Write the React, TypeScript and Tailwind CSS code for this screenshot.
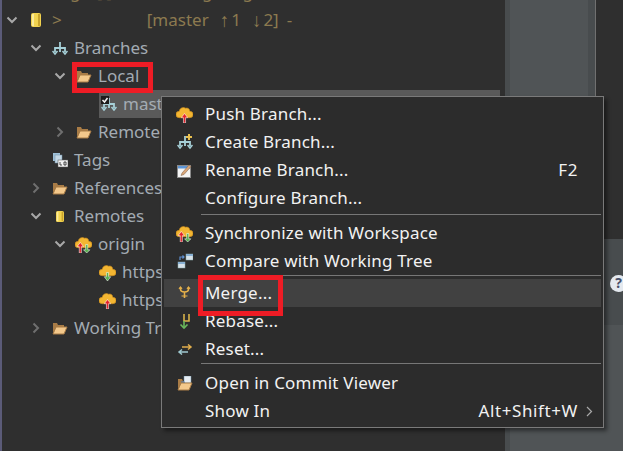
import type { ReactNode } from "react";

const Chevron = ({ open }: { open?: boolean }) => (
  <svg width="12" height="12" viewBox="0 0 12 12" fill="none" stroke="#a8a8a8" strokeWidth="2">
    {open ? <path d="M1.5 3.5L6 8l4.5-4.5" /> : <path d="M3.5 1.5L8 6l-4.500 4.500" stroke="#6f6f6f" />}
  </svg>
);

const Folder = () => (
  <svg width="16" height="13" viewBox="0 0 16 13">
    <path d="M1 1h4l1 2h6v2H4L1 11z" fill="#a97c46" />
    <path d="M1 12l3-7h11l-3 7z" fill="#f3c88b" stroke="#a97c46" />
  </svg>
);

const Repo = ({ large }: { large?: boolean }) => (
  <svg width={large ? 10 : 8} height={large ? 14 : 11} viewBox="0 0 10 14" preserveAspectRatio="none">
    <rect x="0" y="0" width="10" height="14" rx="2" fill="#f2d34f" />
    <rect x="1" y="1" width="2" height="12" fill="#fbeb9a" />
    <rect x="7" y="1" width="2" height="12" fill="#c9a42c" />
  </svg>
);

const BranchIcon = ({ plus }: { plus?: boolean }) => (
  <svg width="16" height="16" viewBox="0 0 16 16" fill="none" stroke="#a6d0d8" strokeWidth="1.8">
    <path d="M8 2v10M3 12V8h10v4" />
    <path d="M0.5 11l2.500 3 2.500-3M10.500 11l2.500 3 2.500-3" strokeWidth="1.5" />
    {plus && <path d="M12 0v6M9 3h6" stroke="#e8c04f" strokeWidth="2" />}
  </svg>
);

const Cloud = ({ arrow }: { arrow: "up" | "down" | "both" }) => (
  <svg width="17" height="17" viewBox="0 0 16 16">
    <path d="M3 11a3 3 0 0 1 0-6 4 4 0 0 1 6-3 3.500 3.500 0 0 1 4 3 3 3 0 0 1 0 6z" fill="#f3b632" stroke="#c98a1c" strokeWidth="0.6" />
    {(arrow === "up" || arrow === "both") && (
      <path d={arrow === "both" ? "M4 16V10H2l3-4 3 4H6v6z" : "M7 16v-5H5l3-4 3 4H9v5z"} fill="#e3222a" stroke="#fff" strokeWidth="0.5" />
    )}
    {(arrow === "down" || arrow === "both") && (
      <path d={arrow === "both" ? "M10 8v5H8l3 3 3-3h-2V8z" : "M7 8v4H5l3 4 3-4H9V8z"} fill="#58b04f" stroke="#fff" strokeWidth="0.5" />
    )}
  </svg>
);

const Tags = () => (
  <svg width="16" height="16" viewBox="0 0 16 16">
    <rect x="1" y="1" width="7" height="8" fill="#9ec0d8" />
    <rect x="3" y="3" width="7" height="8" fill="#c4d8e6" stroke="#6e8da3" strokeWidth="0.5" />
    <rect x="6" y="8" width="10" height="7" fill="#f2f2f2" stroke="#555" strokeWidth="0.5" />
    <path d="M8 10v3h2M12 10h2v3h-2z" fill="none" stroke="#222" strokeWidth="0.8" />
  </svg>
);

const Rename = () => (
  <svg width="15" height="15" viewBox="0 0 15 15">
    <rect x="0.5" y="2.500" width="13" height="12" fill="#f4f4f4" stroke="#8a8a8a" />
    <rect x="1" y="3" width="12" height="2.500" fill="#5d95d6" />
    <path d="M5 10l7-8 2 1.500-7 8-3 1z" fill="#d9a679" stroke="#7a5a40" strokeWidth="0.5" />
  </svg>
);

const Compare = () => (
  <svg width="16" height="16" viewBox="0 0 16 16">
    <rect x="9" y="1" width="7" height="6" fill="#d7e2ea" stroke="#8aa" strokeWidth="0.5" />
    <rect x="9" y="1" width="7" height="2" fill="#89b1d4" />
    <rect x="1" y="9" width="7" height="6" fill="#d7e2ea" stroke="#8aa" strokeWidth="0.5" />
    <rect x="1" y="9" width="7" height="2" fill="#89b1d4" />
    <path d="M3 7V4h4M5.500 2.500L7 4 5.500 5.500" fill="none" stroke="#5f8fd0" strokeWidth="1.2" />
  </svg>
);

const Merge = () => (
  <svg width="13" height="14" viewBox="0 0 12 14" fill="none" stroke="#e5b04a" strokeWidth="1.6">
    <path d="M2 1v2c0 2 2 3 4 3s4-1 4-3V1M6 6v6" />
    <path d="M0.500 3L2 1l1.500 2M8.500 3L10 1l1.500 2M3 10h6" strokeWidth="1.2" />
  </svg>
);

const Rebase = () => (
  <svg width="14" height="17" viewBox="0 0 14 17" fill="none" strokeWidth="1.6">
    <path d="M11 1v7H6V1" stroke="#d8b24a" />
    <path d="M6 8v6" stroke="#6ab85c" />
    <path d="M2.500 11.500L6 15l3.500-3.500" stroke="#6ab85c" />
  </svg>
);

const Reset = () => (
  <svg width="16" height="11" viewBox="0 0 16 11" fill="none" strokeWidth="1.5">
    <path d="M5 3h8M11 0.500L14 3l-3 2.500" stroke="#e0ad4c" />
    <path d="M3 8h8M5 5.500L2 8l3 2.500" stroke="#9ec8cf" />
  </svg>
);

const CommitViewer = () => (
  <svg width="16" height="15" viewBox="0 0 16 15">
    <path d="M1 3h4l1 2h7v2H4l-3 6z" fill="#a97c46" />
    <rect x="7" y="0" width="7" height="7" fill="#e8eef4" stroke="#6e8da3" strokeWidth="0.5" />
    <path d="M4 6h3v1h1" fill="none" stroke="#3f78c0" strokeWidth="1.2" />
    <path d="M1 14l3-7h11l-3 7z" fill="#f3c88b" stroke="#a97c46" />
  </svg>
);

const Checkbox = () => (
  <svg width="8" height="8" viewBox="0 0 8 8" className="absolute left-[2px] top-[6px]">
    <rect width="8" height="8" fill="#1c1c1c" />
    <path d="M1.500 4l2 2 3-4" fill="none" stroke="#f4f4f4" strokeWidth="1.500" />
  </svg>
);

const TreeRow = ({
  indent,
  chevron,
  icon,
  children,
}: {
  indent: number;
  chevron?: "open" | "closed";
  icon?: ReactNode;
  children: ReactNode;
}) => (
  <div className="flex h-7 items-center whitespace-nowrap" style={{ paddingLeft: indent }}>
    <span className="flex w-[17px] shrink-0 items-center">
      {chevron && <Chevron open={chevron === "open"} />}
    </span>
    <span className="flex w-[27px] shrink-0 items-center justify-center pr-[2px]">{icon}</span>
    <span>{children}</span>
  </div>
);

const MenuRow = ({
  icon,
  label,
  shortcut,
  arrow,
  hover,
}: {
  icon?: ReactNode;
  label: string;
  shortcut?: string;
  arrow?: boolean;
  hover?: boolean;
}) => (
  <div className={`flex h-7 items-center ${hover ? "bg-[#414141]" : ""}`}>
    <span className="flex w-[41px] shrink-0 items-center justify-center">{icon}</span>
    <span className="flex-1">{label}</span>
    {shortcut && <span className="tracking-[0.6px]">{shortcut}</span>}
    <span className="flex w-[23px] shrink-0 items-center justify-center">
      {arrow && (
        <svg width="7" height="11" viewBox="0 0 7 11" fill="none" stroke="#a8a8a8" strokeWidth="1.2">
          <path d="M1 1l4.500 4.500L1 10" />
        </svg>
      )}
    </span>
  </div>
);

const peeks = [265, 275, 293, 332, 336, 376, 395];

export default function App() {
  return (
    <div className="relative flex h-[451px] w-[623px] overflow-hidden bg-[#2f2f2f] font-['Noto_Sans','Open_Sans',sans-serif] text-[17px]">
      <div className="w-[2px] shrink-0 bg-[#5b5b78]" />

      <div className="-ml-[2px] -mt-[22px] w-[505px] shrink-0 text-[#a3abb3]">
        <div className="flex h-7 items-center whitespace-pre pl-[70px] text-[#8c7a4f]">
          <span>g</span>
          <span className="ml-[16px]">[ ]</span>
          <span className="ml-[90px]">g</span>
          <span className="ml-[30px]">g</span>
        </div>
        <div className="flex h-7 items-center whitespace-nowrap pl-[6px] text-[#8c7a4f]">
          <span className="flex w-[17px] shrink-0 items-center">
            <Chevron open />
          </span>
          <span className="flex w-[27px] shrink-0 items-center justify-center pr-[2px]">
            <Repo large />
          </span>
          <span className="ml-[2px]">&gt;</span>
          <span className="ml-[85px]">[master</span>
          <span className="ml-[11px] text-[19px] leading-none">↑</span>
          <span className="ml-[2px]">1</span>
          <span className="ml-[11px] text-[19px] leading-none">↓</span>
          <span className="ml-[2px]">2]</span>
          <span className="ml-[8px]">-</span>
        </div>
        <TreeRow indent={30} chevron="open" icon={<BranchIcon />}>Branches</TreeRow>
        <TreeRow indent={54} chevron="open" icon={<Folder />}>Local</TreeRow>
        <div className="relative ml-[99px] mr-[5px] flex h-7 items-center bg-[#5a5a5a] pl-[2px]">
          <BranchIcon />
          <Checkbox />
          <span className="ml-[6px]">master</span>
          {peeks.map((x) => (
            <span key={x} className="absolute top-[6px] h-px w-[3px] bg-[#a0a0a0]" style={{ left: x }} />
          ))}
        </div>
        <TreeRow indent={54} chevron="closed" icon={<Folder />}>Remote Tracking</TreeRow>
        <TreeRow indent={30} icon={<Tags />}>Tags</TreeRow>
        <TreeRow indent={30} chevron="closed" icon={<Folder />}>References</TreeRow>
        <TreeRow indent={30} chevron="open" icon={<Repo />}>Remotes</TreeRow>
        <TreeRow indent={54} chevron="open" icon={<Cloud arrow="both" />}>origin</TreeRow>
        <TreeRow indent={78} icon={<Cloud arrow="down" />}>https://github.com</TreeRow>
        <TreeRow indent={78} icon={<Cloud arrow="up" />}>https://github.com</TreeRow>
        <TreeRow indent={30} chevron="closed" icon={<Folder />}>Working Tree</TreeRow>
      </div>

      <div className="flex min-w-0 flex-1 flex-col">
        <div className="flex h-[239px] shrink-0">
          <div className="w-[5px] shrink-0 bg-[#484c4e]" />
          <div className="w-[78px] shrink-0 bg-[#505456]" />
          <div className="w-[7px] shrink-0 bg-[#484c4e]" />
          <div className="w-px shrink-0 bg-[#707070]" />
          <div className="flex-1 bg-[#2f2f2f]" />
        </div>
        <div className="flex h-[86px] shrink-0 items-center justify-end bg-[#484c4e]">
          <div className="mr-[-4px] mt-[2px] flex h-[17px] w-[17px] items-center justify-center rounded-full bg-[#e4e9ef] text-[14px] font-bold leading-none text-[#47506a]">
            ?
          </div>
        </div>
        <div className="flex flex-1">
          <div className="w-[5px] shrink-0 bg-[#484c4e]" />
          <div className="flex-1 bg-[#505456]" />
        </div>
      </div>

      <div className="absolute left-[161px] top-[96px] h-[332px] w-[443px] border border-[#7a7a7a] bg-[#2c2c2c] px-[2px] pt-[3px] tracking-[0.2px] text-[#f2f2f2] shadow-[3px_3px_4px_rgba(0,0,0,0.45)]">
        <MenuRow icon={<Cloud arrow="up" />} label="Push Branch..." />
        <MenuRow icon={<BranchIcon plus />} label="Create Branch..." />
        <MenuRow icon={<Rename />} label="Rename Branch..." shortcut="F2" />
        <MenuRow label="Configure Branch..." />
        <div className="mb-1 ml-[37px] mt-[2px] h-px bg-[#777777]" />
        <MenuRow icon={<Cloud arrow="both" />} label="Synchronize with Workspace" />
        <MenuRow icon={<Compare />} label="Compare with Working Tree" />
        <div className="mb-[3px] ml-[37px] h-px bg-[#777777]" />
        <MenuRow icon={<Merge />} label="Merge..." hover />
        <MenuRow icon={<Rebase />} label="Rebase..." />
        <MenuRow icon={<Reset />} label="Reset..." />
        <div className="mb-[5px] ml-[37px] h-px bg-[#777777]" />
        <MenuRow icon={<CommitViewer />} label="Open in Commit Viewer" />
        <MenuRow label="Show In" shortcut="Alt+Shift+W" arrow />
      </div>

      <div className="absolute left-[72px] top-[62px] h-[31px] w-[81px] border-[5px] border-[#ee1c25]" />
      <div className="absolute left-[198px] top-[275px] h-[41px] w-[85px] border-[5px] border-[#ee1c25]" />
    </div>
  );
}
